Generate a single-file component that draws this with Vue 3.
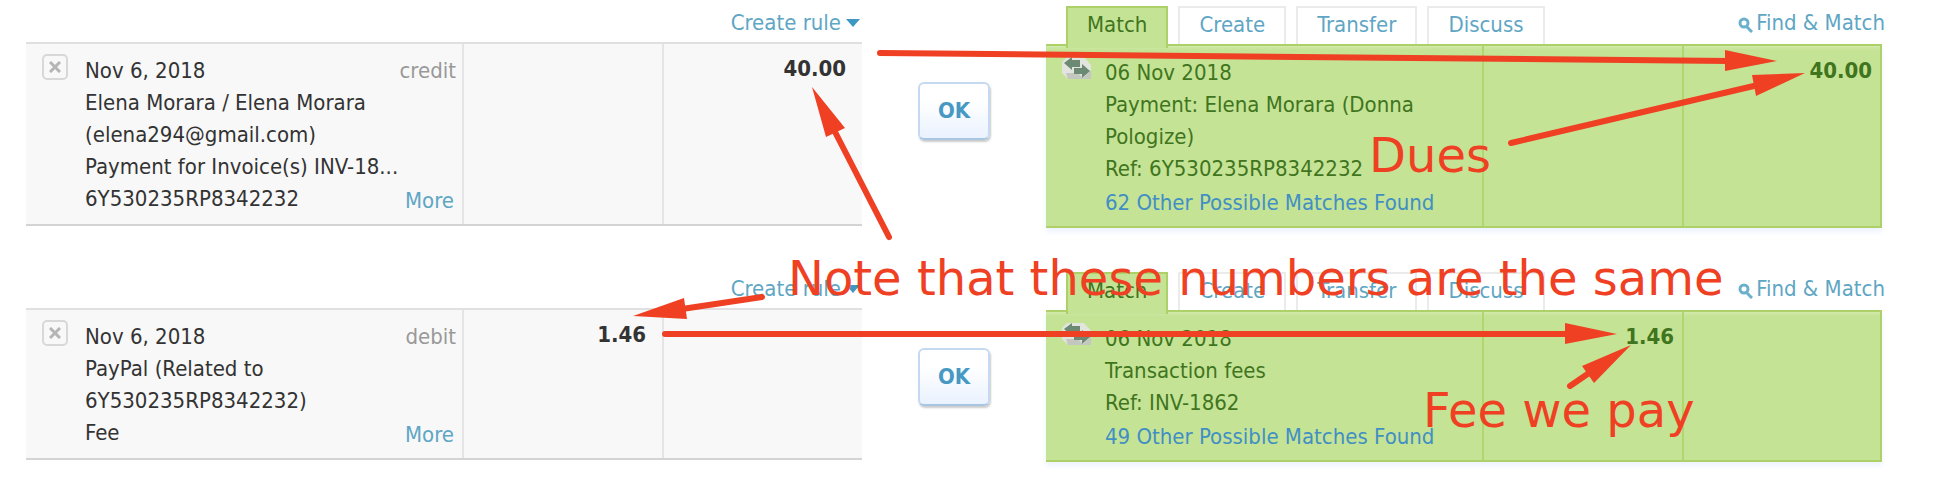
<script setup>
const rows = [
  {
    id: 1,
    kind: 'credit',
    date: 'Nov 6, 2018',
    lines: ['Elena Morara / Elena Morara', '(elena294@gmail.com)', 'Payment for Invoice(s) INV-18...', '6Y530235RP8342232'],
    spent: '',
    received: '40.00',
    matchLines: ['06 Nov 2018', 'Payment: Elena Morara (Donna', 'Pologize)', 'Ref: 6Y530235RP8342232'],
    others: '62 Other Possible Matches Found',
  },
  {
    id: 2,
    kind: 'debit',
    date: 'Nov 6, 2018',
    lines: ['PayPal (Related to', '6Y530235RP8342232)', 'Fee'],
    spent: '1.46',
    received: '',
    matchLines: ['06 Nov 2018', 'Transaction fees', 'Ref: INV-1862'],
    others: '49 Other Possible Matches Found',
  },
]
const tabs = ['Match', 'Create', 'Transfer', 'Discuss']
const arrows = [
  { line: [880, 53, 1730, 61], head: '1725,50 1777,61 1725,71' },
  { line: [1511, 143, 1758, 85], head: '1752,75 1805,73 1756,96' },
  { line: [889, 237, 833, 128], head: '845,128 812,87 826,137' },
  { line: [762, 297, 682, 309], head: '684,298 633,316 687,319' },
  { line: [665, 334, 1570, 334], head: '1565,323 1617,334 1565,344' },
  { line: [1570, 386, 1592, 371], head: '1582,366 1631,345 1594,383' },
]
</script>

<template>
  <main class="page">
    <section v-for="row in rows" :key="row.id" class="row">
      <div class="side">
        <header class="bar rule-bar">
          <a class="link rule" href="#">Create rule
            <svg class="caret" width="14" height="10" viewBox="0 0 14 10" aria-hidden="true"><path d="M0 1h14L7 9z" /></svg>
          </a>
        </header>
        <div class="panel statement">
          <div class="cell detail">
            <button class="remove" type="button" aria-label="Delete statement line">
              <svg width="12" height="12" viewBox="0 0 12 12" aria-hidden="true"><path d="M1 1l10 10M11 1L1 11" /></svg>
            </button>
            <div class="text">
              <div class="first"><span>{{ row.date }}</span><span class="kind">{{ row.kind }}</span></div>
              <div v-for="line in row.lines" :key="line">{{ line }}</div>
            </div>
            <a class="link more" href="#">More</a>
          </div>
          <div class="cell amount">{{ row.spent }}</div>
          <div class="cell amount">{{ row.received }}</div>
        </div>
      </div>

      <div class="confirm"><button class="ok" type="button">OK</button></div>

      <div class="side">
        <header class="bar tab-bar">
          <nav class="tabs">
            <button v-for="(tab, i) in tabs" :key="tab" type="button" class="tab" :class="{ active: i === 0 }">{{ tab }}</button>
          </nav>
          <a class="link find" href="#">
            <svg width="16" height="16" viewBox="0 0 16 16" aria-hidden="true"><circle cx="7" cy="6" r="4" /><path d="M10 10l5 5" /></svg>Find &amp; Match</a>
        </header>
        <div class="panel match">
          <div class="cell detail">
            <svg class="swap" width="30" height="26" viewBox="0 0 30 26" aria-hidden="true">
              <path class="paper" d="M5 1h17l7 8v14H6l-6-6V6z" />
              <path class="shade" d="M4 17h12l5 5 8-8v9H6z" />
              <path class="arrow" d="M2 7l8-6v3h8v7h-8v3z" />
              <path class="arrow" d="M28 15l-8-7v4h-8v6h8v4z" />
            </svg>
            <div class="text">
              <div v-for="line in row.matchLines" :key="line">{{ line }}</div>
              <a class="others" href="#">{{ row.others }}</a>
            </div>
          </div>
          <div class="cell amount">{{ row.spent }}</div>
          <div class="cell amount">{{ row.received }}</div>
        </div>
      </div>
    </section>

    <svg class="notes" viewBox="0 0 1934 498">
      <g v-for="arrow in arrows" :key="arrow.head">
        <line :x1="arrow.line[0]" :y1="arrow.line[1]" :x2="arrow.line[2]" :y2="arrow.line[3]" />
        <polygon :points="arrow.head" />
      </g>
      <text x="788" y="295">Note that these numbers are the same</text>
      <text x="1369" y="172">Dues</text>
      <text x="1423" y="427">Fee we pay</text>
    </svg>
  </main>
</template>

<style>
body {
  margin: 0;
  background: #fff;
}
</style>

<style scoped>
.page {
  position: relative;
  padding: 0 52px 36px 26px;
  font: 22px/32px "DejaVu Sans Condensed", "DejaVu Sans", sans-serif;
  color: #333;
}
.row {
  display: grid;
  grid-template-columns: 1fr 184px 1fr;
  align-items: start;
}
.row + .row {
  margin-top: 38px;
}
button {
  font: inherit;
  cursor: pointer;
}
.link {
  color: #5ea6c4;
  text-decoration: none;
}
.bar {
  display: flex;
  box-sizing: border-box;
}
.rule-bar {
  height: 42px;
  padding-top: 7px;
  justify-content: flex-end;
}
.rule {
  display: flex;
  align-items: center;
  gap: 5px;
  margin-right: 2px;
  height: 32px;
}
.caret {
  fill: #3f97c4;
}
.tab-bar {
  height: 44px;
  padding-top: 6px;
  padding-left: 20px;
  justify-content: space-between;
}
.find {
  margin-top: 1px;
  margin-right: -3px;
}
.find svg {
  margin-right: 3px;
  fill: none;
  stroke: #6bb0cd;
  stroke-width: 3;
  vertical-align: -3px;
}
.tabs {
  display: flex;
  gap: 10px;
}
.tab {
  height: 38px;
  padding: 1px 19px 3px;
  border: 2px solid #ebebeb;
  border-bottom: 0;
  background: #fff;
  color: #5ea6c4;
}
.tab.active {
  position: relative;
  height: 42px;
  padding-bottom: 7px;
  border-color: #aed068;
  background: #c5e395;
  color: #40751e;
}
.panel {
  display: grid;
  grid-template-columns: 436fr 200fr 200fr;
}
.cell {
  box-sizing: border-box;
  min-width: 0;
}
.detail {
  display: flex;
  position: relative;
  padding: 10px 6px 9px 16px;
}
.text {
  flex: 1;
  padding-top: 1px;
  white-space: nowrap;
}
.first {
  display: flex;
  justify-content: space-between;
}
.kind {
  color: #999;
}
.statement {
  border-top: 2px solid #e0e0e0;
  border-bottom: 2px solid #d4d4d4;
  background: #f8f8f8;
}
.statement .cell + .cell {
  border-left: 2px solid #e5e5e5;
}
.remove {
  display: grid;
  place-items: center;
  width: 26px;
  height: 26px;
  margin-right: 17px;
  padding: 0;
  border: 2px solid #d8d8d8;
  border-radius: 5px;
  background: #f8f8f8;
}
.remove svg {
  stroke: #b5b5b5;
  stroke-width: 3;
}
.more {
  position: absolute;
  right: 8px;
  bottom: 7px;
}
.amount {
  padding: 9px 16px;
  text-align: right;
  font-weight: bold;
}
.confirm {
  display: flex;
  justify-content: center;
  padding-top: 82px;
}
.ok {
  width: 72px;
  height: 58px;
  padding: 0;
  border: 2px solid #c5d9f0;
  border-bottom-color: #a8c6e2;
  border-radius: 6px;
  background: linear-gradient(#fff 30%, #eaf2ff);
  box-shadow: 1px 2px 2px #ccc;
  color: #4799c3;
  font-weight: bold;
}
.match {
  grid-template-columns: 436fr 200fr 198fr;
  border: 2px solid #aed068;
  border-left: 0;
  background: linear-gradient(#d2eaac, #c5e395 4px);
  box-shadow: 0 4px 6px #edf3ff;
  color: #40751e;
}
.match .cell + .cell {
  border-left: 2px solid #b0d66e;
}
.match .detail {
  padding-bottom: 7px;
}
.match .amount {
  padding-right: 8px;
}
.swap {
  margin-right: 13px;
}
.paper {
  fill: #e2e4de;
}
.shade {
  fill: #c3c7bf;
}
.arrow {
  fill: #6b8973;
}
.others {
  display: block;
  margin-top: 2px;
  color: #418fc4;
  text-decoration: none;
}
.notes {
  position: absolute;
  top: 0;
  left: 0;
  width: 100%;
  pointer-events: none;
  fill: #ef4023;
  font: 48px "DejaVu Sans", sans-serif;
}
.notes line {
  stroke: #ef4023;
  stroke-width: 6;
  stroke-linecap: round;
}
</style>
